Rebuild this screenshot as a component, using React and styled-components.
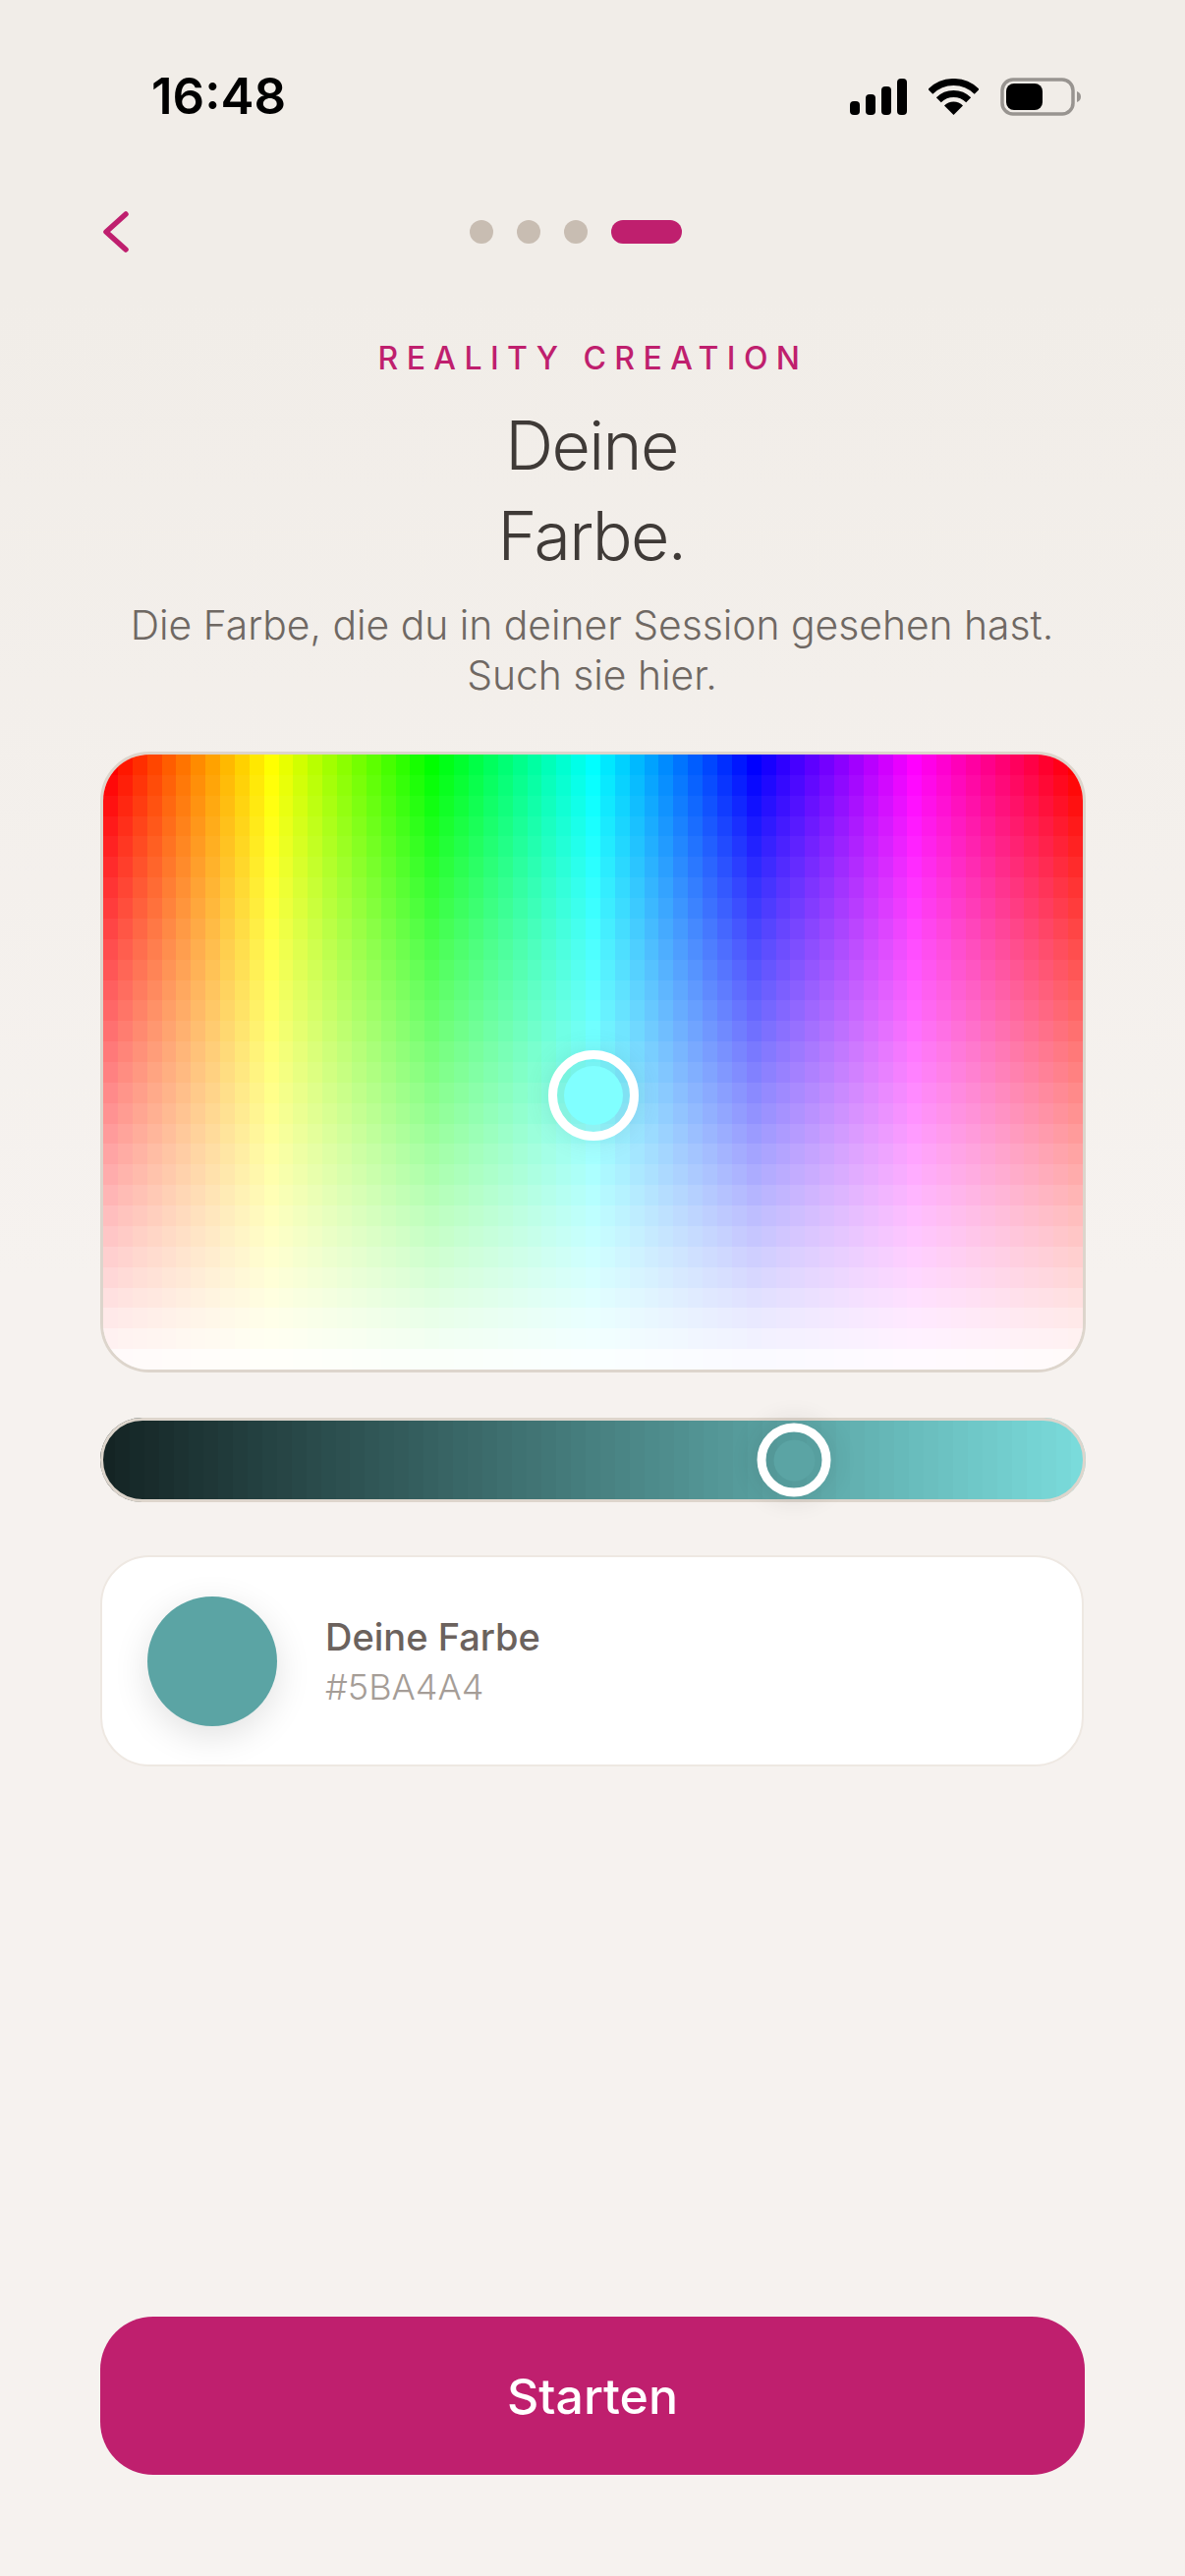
import { useMemo } from "react";
import styled, { createGlobalStyle } from "styled-components";

const PINK = "#bf1f6e";
const SELECTED = "#5ba4a4";

const GlobalStyle = createGlobalStyle`
  html, body {
    margin: 0;
    padding: 0;
    background: #f6f2ef;
  }
  * {
    box-sizing: border-box;
  }
`;

const Page = styled.div`
  width: 1206px;
  height: 2622px;
  display: flex;
  flex-direction: column;
  padding: 79px 101px 103px 102px;
  overflow: hidden;
  font-family: Inter, "Liberation Sans", sans-serif;
  background: linear-gradient(180deg, #f1ede8 0, #f1ede8 300px, #f6f2ef 1300px);
`;

const StatusBar = styled.div`
  height: 38px;
  display: flex;
  align-items: center;
  justify-content: space-between;
  padding: 0 4px 0 52px;
`;

const Time = styled.span`
  font-size: 51px;
  line-height: 38px;
  font-weight: 600;
  color: #000;
`;

const StatusIcons = styled.div`
  display: flex;
  align-items: center;
  gap: 22px;
`;

const Nav = styled.div`
  display: flex;
  align-items: center;
  gap: 347px;
  height: 42px;
  margin-top: 98px;
  padding-left: 3px;
`;

const BackIcon = styled.svg`
  width: 26px;
  height: 42px;
  display: block;
`;

const Dots = styled.div`
  display: flex;
  align-items: center;
  gap: 24px;
`;

const Dot = styled.span`
  width: ${(props) => (props.active ? "72px" : "24px")};
  height: 24px;
  border-radius: 12px;
  background: ${(props) => (props.active ? PINK : "#c8bdb2")};
`;

const Eyebrow = styled.div`
  margin-top: 90px;
  text-align: center;
  font-size: 32px;
  line-height: 36px;
  font-weight: 500;
  letter-spacing: 8.4px;
  color: ${PINK};
`;

const Title = styled.h1`
  margin: 24px 0 0;
  padding-right: 3px;
  text-align: center;
  font-size: 68px;
  line-height: 92px;
  font-weight: 300;
  letter-spacing: -1.6px;
  color: #3f3a37;
`;

const Subtitle = styled.p`
  margin: 20px 0 0;
  padding-right: 2px;
  text-align: center;
  font-size: 40.8px;
  line-height: 51px;
  font-weight: 300;
  color: #6f6863;
`;

const PickerBox = styled.div`
  position: relative;
  margin-top: 52px;
  width: 1003px;
  height: 632px;
  border: 3px solid #ddd5cc;
  border-radius: 50px;
  overflow: hidden;
`;

const Swatches = styled.svg`
  width: 100%;
  height: 100%;
  display: block;
`;

const PickerThumb = styled.div`
  position: absolute;
  left: 50%;
  top: 55.5%;
  width: 92px;
  height: 92px;
  transform: translate(-50%, -50%);
  display: flex;
  align-items: center;
  justify-content: center;
  border: 9px solid #fff;
  border-radius: 50%;
  background: rgba(70, 170, 170, 0.14);
  box-shadow: 0 0 24px rgba(60, 110, 120, 0.16);
`;

const SliderBox = styled.div`
  position: relative;
  margin-top: 46px;
  width: 1003px;
  height: 86px;
  border-radius: 43px;

  &::after {
    content: "";
    position: absolute;
    inset: 0;
    border: 3px solid #ddd5cc;
    border-radius: 43px;
  }
`;

const SliderTrack = styled.div`
  width: 100%;
  height: 100%;
  border-radius: 43px;
  overflow: hidden;
`;

const SliderThumb = styled.div`
  position: absolute;
  z-index: 1;
  left: 70.4%;
  top: 50%;
  width: 75px;
  height: 75px;
  transform: translate(-50%, -50%);
  display: flex;
  align-items: center;
  justify-content: center;
  border: 9px solid #fff;
  border-radius: 50%;
  background: rgba(60, 120, 120, 0.2);
  box-shadow: 0 0 28px rgba(40, 40, 40, 0.14);
`;

const ThumbCore = styled.span`
  width: ${(props) => props.size}px;
  height: ${(props) => props.size}px;
  border-radius: 50%;
  background: ${(props) => props.color};
`;

const ResultCard = styled.div`
  margin-top: 54px;
  width: 1001px;
  height: 215px;
  display: flex;
  align-items: center;
  gap: 49px;
  padding-left: 46px;
  background: #fff;
  border: 2px solid #eee8e2;
  border-radius: 50px;
`;

const ResultSwatch = styled.div`
  width: 132px;
  height: 132px;
  border-radius: 50%;
  background: ${SELECTED};
  box-shadow: 0 10px 36px rgba(0, 0, 0, 0.12);
`;

const ResultText = styled.div`
  display: flex;
  flex-direction: column;
  gap: 6px;
`;

const ResultName = styled.span`
  font-size: 38px;
  line-height: 46px;
  font-weight: 500;
  color: #6b625d;
`;

const ResultHex = styled.span`
  font-size: 36px;
  line-height: 44px;
  font-weight: 300;
  color: #a59d97;
`;

const StartButton = styled.button`
  margin-top: auto;
  width: 1002px;
  height: 161px;
  border: none;
  border-radius: 54px;
  background: ${PINK};
  color: #fff;
  font-family: inherit;
  font-size: 50px;
  font-weight: 500;
`;

const COLS = 67;
const ROWS = 30;

const ColorField = () => {
  const cells = useMemo(() => {
    const out = [];
    for (let r = 0; r < ROWS; r++) {
      for (let c = 0; c < COLS; c++) {
        const hue = (c / (COLS - 1)) * 360;
        const light = 50 + (r / (ROWS - 1)) * 49;
        out.push(
          <rect key={`${r}-${c}`} x={c} y={r} width="1" height="1" fill={`hsl(${hue} 100% ${light}%)`} />
        );
      }
    }
    return out;
  }, []);
  return (
    <Swatches viewBox={`0 0 ${COLS} ${ROWS}`} preserveAspectRatio="none" shapeRendering="crispEdges">
      {cells}
    </Swatches>
  );
};

const BrightnessField = () => {
  const from = [20, 36, 36];
  const to = [122, 219, 219];
  const cells = [];
  for (let c = 0; c < COLS; c++) {
    const t = c / (COLS - 1);
    const [r, g, b] = from.map((v, i) => Math.round(v + (to[i] - v) * t));
    cells.push(<rect key={c} x={c} y="0" width="1" height="1" fill={`rgb(${r},${g},${b})`} />);
  }
  return (
    <Swatches viewBox={`0 0 ${COLS} 1`} preserveAspectRatio="none" shapeRendering="crispEdges">
      {cells}
    </Swatches>
  );
};

const SignalIcon = () => (
  <svg width="58" height="37" viewBox="0 0 58 37">
    <rect x="0" y="23" width="10" height="14" rx="4" fill="#000" />
    <rect x="16" y="16" width="10" height="21" rx="4" fill="#000" />
    <rect x="32" y="8" width="10" height="29" rx="4" fill="#000" />
    <rect x="48" y="0" width="10" height="37" rx="4" fill="#000" />
  </svg>
);

const WifiIcon = () => (
  <svg width="51" height="37" viewBox="0 0 51 37">
    <path d="M1.8 13.3A33.5 33.5 0 0 1 49.2 13.3" fill="none" stroke="#000" strokeWidth="7" />
    <path d="M10.3 21.8A21.5 21.5 0 0 1 40.7 21.8" fill="none" stroke="#000" strokeWidth="7" />
    <path d="M25.5 37L16 27.5A13.4 13.4 0 0 1 35 27.5Z" fill="#000" />
  </svg>
);

const BatteryIcon = () => (
  <svg width="83" height="39" viewBox="0 0 83 39">
    <rect x="2" y="2" width="72" height="35" rx="11" fill="none" stroke="#989490" strokeWidth="3.5" />
    <rect x="6" y="6" width="37" height="27" rx="8" fill="#000" />
    <path d="M78 14C81 15 82 17 82 19.500C82 22 81 24 78 25Z" fill="#989490" />
  </svg>
);

const App = () => (
  <Page>
    <GlobalStyle />
    <StatusBar>
      <Time>16:48</Time>
      <StatusIcons>
        <SignalIcon />
        <WifiIcon />
        <BatteryIcon />
      </StatusIcons>
    </StatusBar>
    <Nav>
      <BackIcon viewBox="0 0 26 42">
        <path d="M23 3L3 21L23 39" fill="none" stroke={PINK} strokeWidth="5.5" strokeLinecap="round" strokeLinejoin="round" />
      </BackIcon>
      <Dots>
        <Dot />
        <Dot />
        <Dot />
        <Dot active />
      </Dots>
    </Nav>
    <Eyebrow>REALITY CREATION</Eyebrow>
    <Title>
      Deine
      <br />
      Farbe.
    </Title>
    <Subtitle>
      Die Farbe, die du in deiner Session gesehen hast.
      <br />
      Such sie hier.
    </Subtitle>
    <PickerBox>
      <ColorField />
      <PickerThumb>
        <ThumbCore size={60} color="#80ffff" />
      </PickerThumb>
    </PickerBox>
    <SliderBox>
      <SliderTrack>
        <BrightnessField />
      </SliderTrack>
      <SliderThumb>
        <ThumbCore size={42} color={SELECTED} />
      </SliderThumb>
    </SliderBox>
    <ResultCard>
      <ResultSwatch />
      <ResultText>
        <ResultName>Deine Farbe</ResultName>
        <ResultHex>#5BA4A4</ResultHex>
      </ResultText>
    </ResultCard>
    <StartButton>Starten</StartButton>
  </Page>
);

export default App;
